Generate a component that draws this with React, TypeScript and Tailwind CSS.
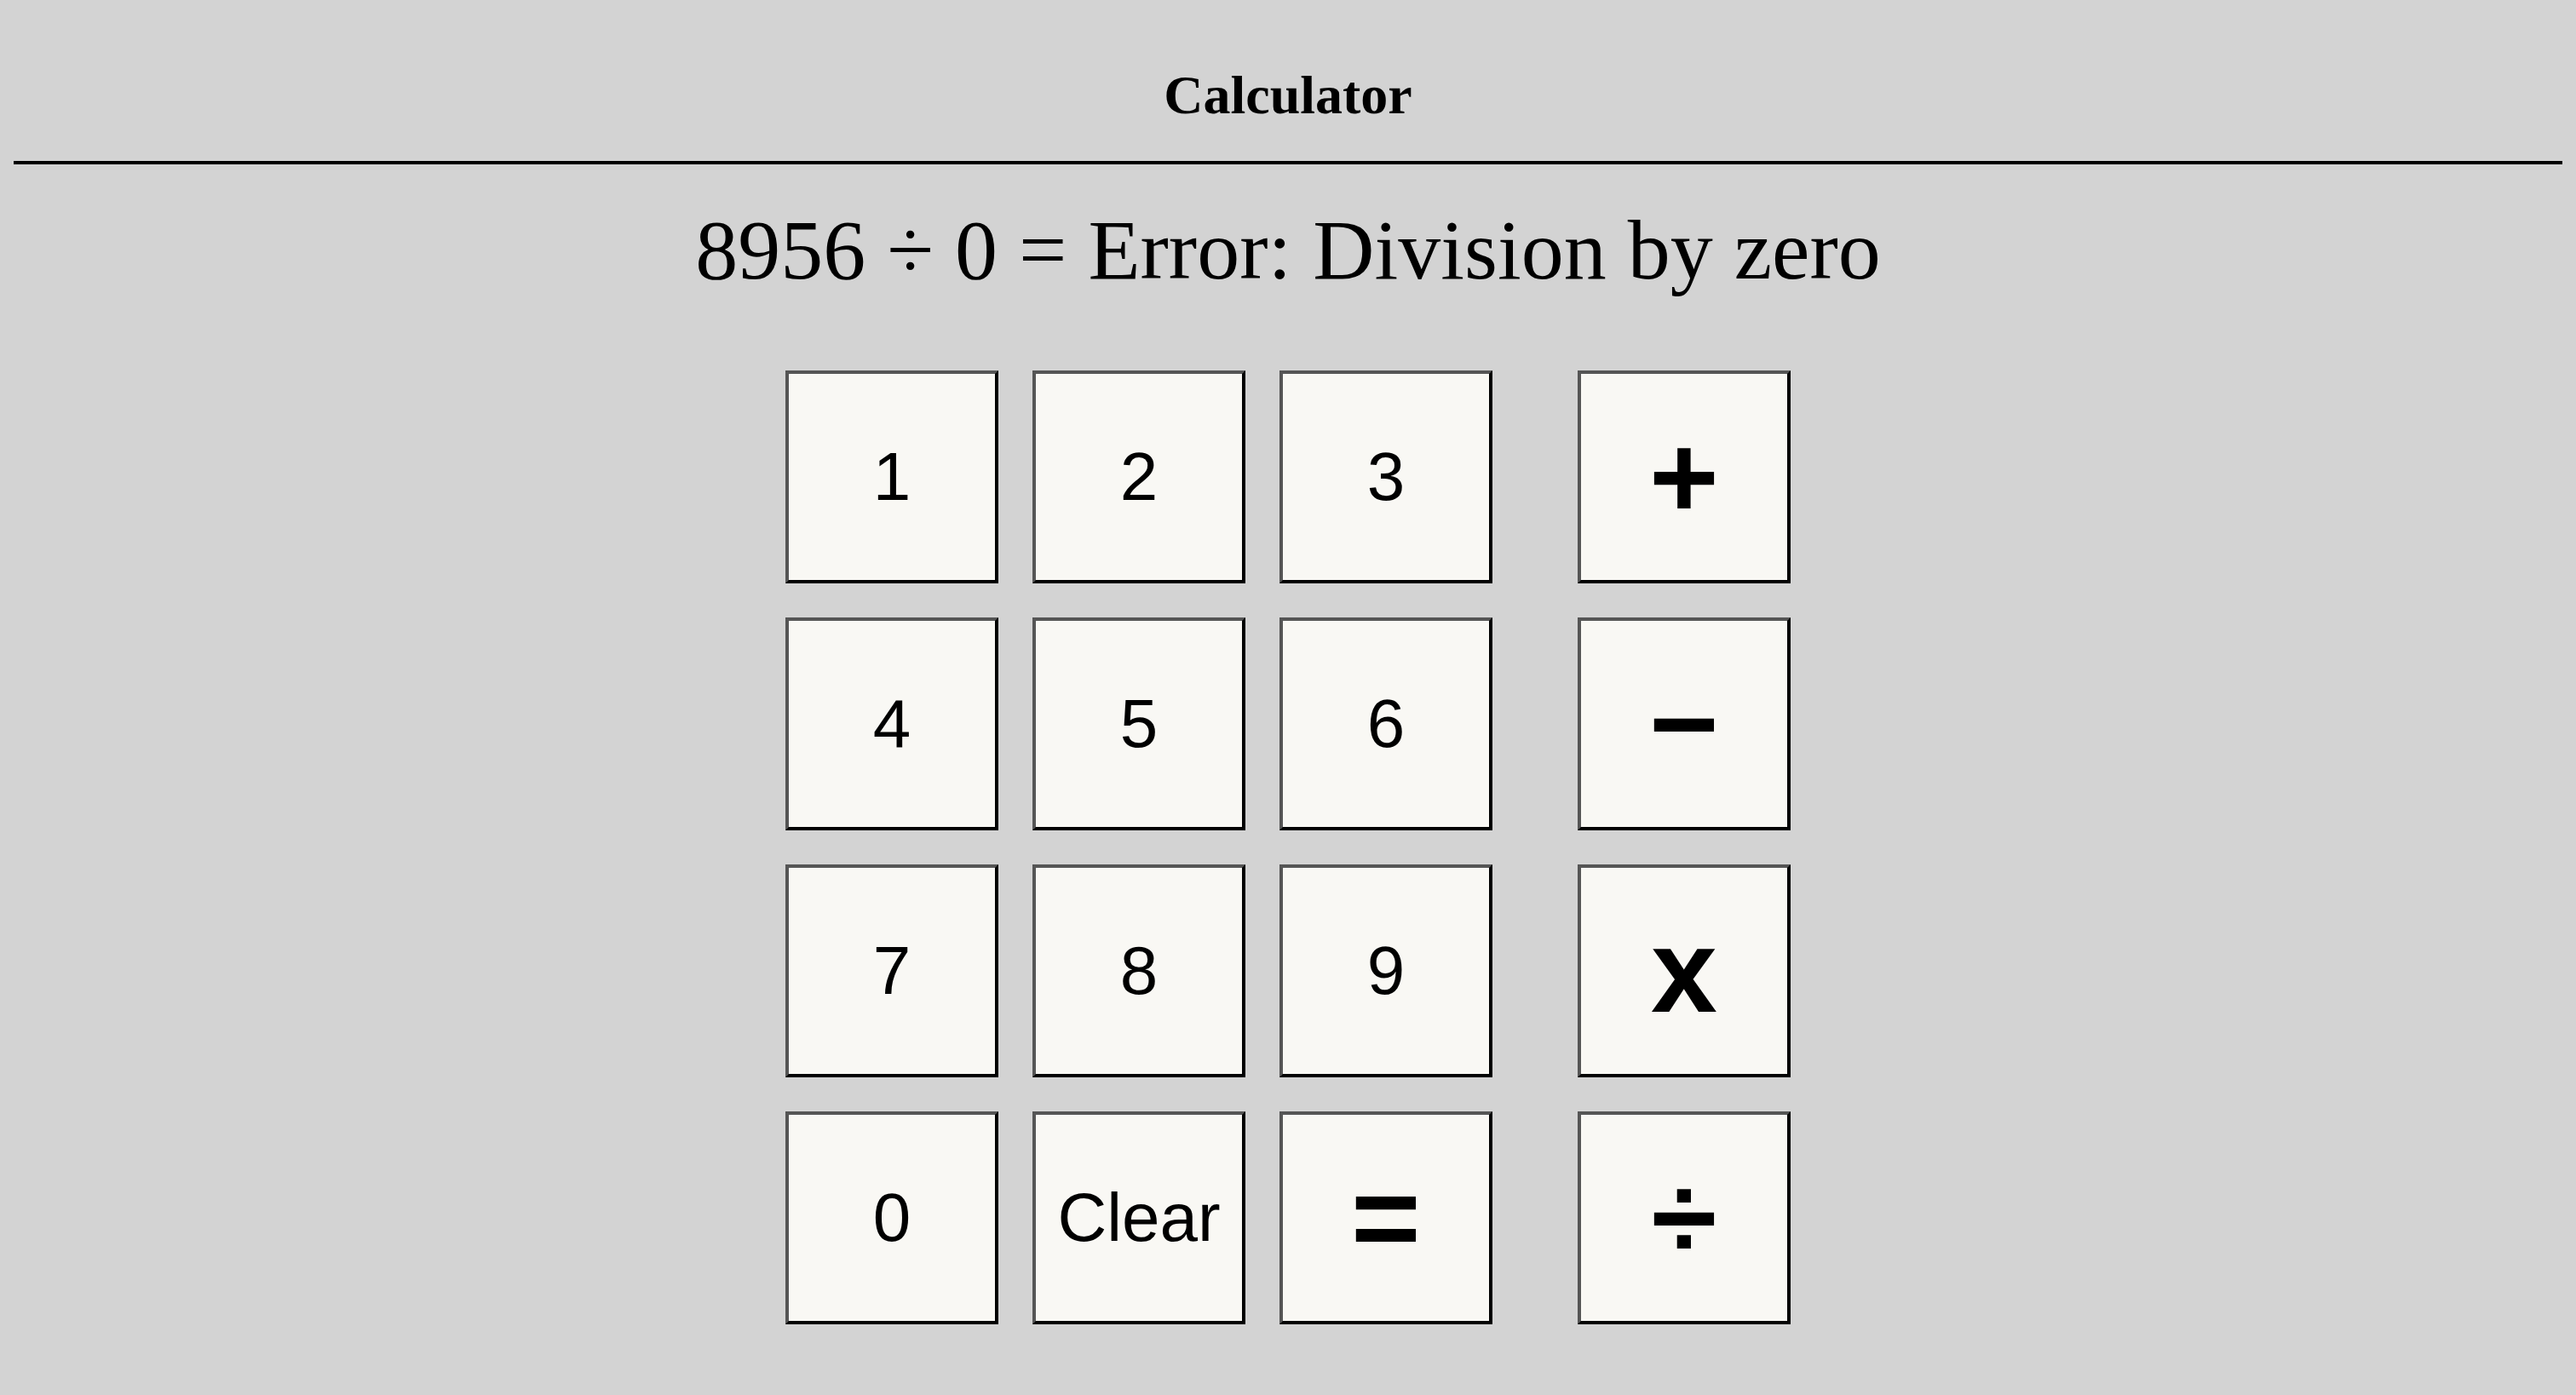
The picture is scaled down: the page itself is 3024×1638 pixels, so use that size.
import React, { useState } from 'react';

const digitKeys = ['1', '2', '3', '4', '5', '6', '7', '8', '9', '0', 'Clear', '='];
const opKeys = [
  { label: '+', op: '+' },
  { label: '−', op: '-' },
  { label: 'x', op: '*' },
  { label: '÷', op: '/' },
];

const btnBase =
  'w-[250px] h-[250px] flex items-center justify-center bg-[#f9f8f4] text-black border-4 border-t-[#555555] border-l-[#555555] border-b-black border-r-black';

const symbolOf = (op: string) => (op === '+' ? '+' : op === '-' ? '−' : op === '*' ? 'x' : '÷');

const App = () => {
  const [a, setA] = useState('8956');
  const [op, setOp] = useState<string | null>('/');
  const [b, setB] = useState('0');
  const [result, setResult] = useState<string | null>('Error: Division by zero');

  const press = (key: string) => {
    if (key === 'Clear') {
      setA(''); setOp(null); setB(''); setResult(null);
      return;
    }
    if (key === '=') {
      if (!op || !a || !b) return;
      const x = Number(a), y = Number(b);
      if (op === '/' && y === 0) setResult('Error: Division by zero');
      else if (op === '+') setResult(String(x + y));
      else if (op === '-') setResult(String(x - y));
      else if (op === '*') setResult(String(x * y));
      else setResult(String(x / y));
      return;
    }
    if (result !== null) {
      setA(key); setOp(null); setB(''); setResult(null);
      return;
    }
    if (op) setB(b + key);
    else setA(a + key);
  };

  const pressOp = (o: string) => {
    if (result !== null) {
      setA(result.startsWith('Error') ? '' : result); setB(''); setResult(null);
    }
    setOp(o);
  };

  let display = a;
  if (op) display += ` ${symbolOf(op)} ${b}`;
  if (result !== null) display += ` = ${result}`;

  return (
    <div className="min-h-screen bg-[#d3d3d3]">
      <h1 className="pt-[76px] text-center text-[64px] leading-[71px] font-bold text-black font-['Liberation_Serif','Times_New_Roman',serif]">
        Calculator
      </h1>
      <div className="mx-[16px] mt-[42px] border-t-4 border-black" />
      <div className="mt-[45px] text-center text-[100px] leading-[111px] text-black font-['Liberation_Serif','Times_New_Roman',serif] whitespace-pre">
        {display || '\u00a0'}
      </div>

      <div className="mt-[86px] flex justify-center font-['Liberation_Sans',Arial,sans-serif]">
        <div className="grid grid-cols-[250px_250px_250px] gap-[40px]">
          {digitKeys.map(k => (
            <button
              key={k}
              onClick={() => press(k)}
              className={`${btnBase} ${k === '=' ? 'text-[140px] font-bold leading-[156px]' : 'text-[80px] leading-[90px]'}`}
            >
              {k}
            </button>
          ))}
        </div>
        <div className="ml-[100px] flex flex-col gap-[40px]">
          {opKeys.map(o => (
            <button
              key={o.op}
              onClick={() => pressOp(o.op)}
              className={`${btnBase} text-[140px] font-bold leading-[156px]`}
            >
              {o.label}
            </button>
          ))}
        </div>
      </div>
    </div>
  );
};

export default App;
